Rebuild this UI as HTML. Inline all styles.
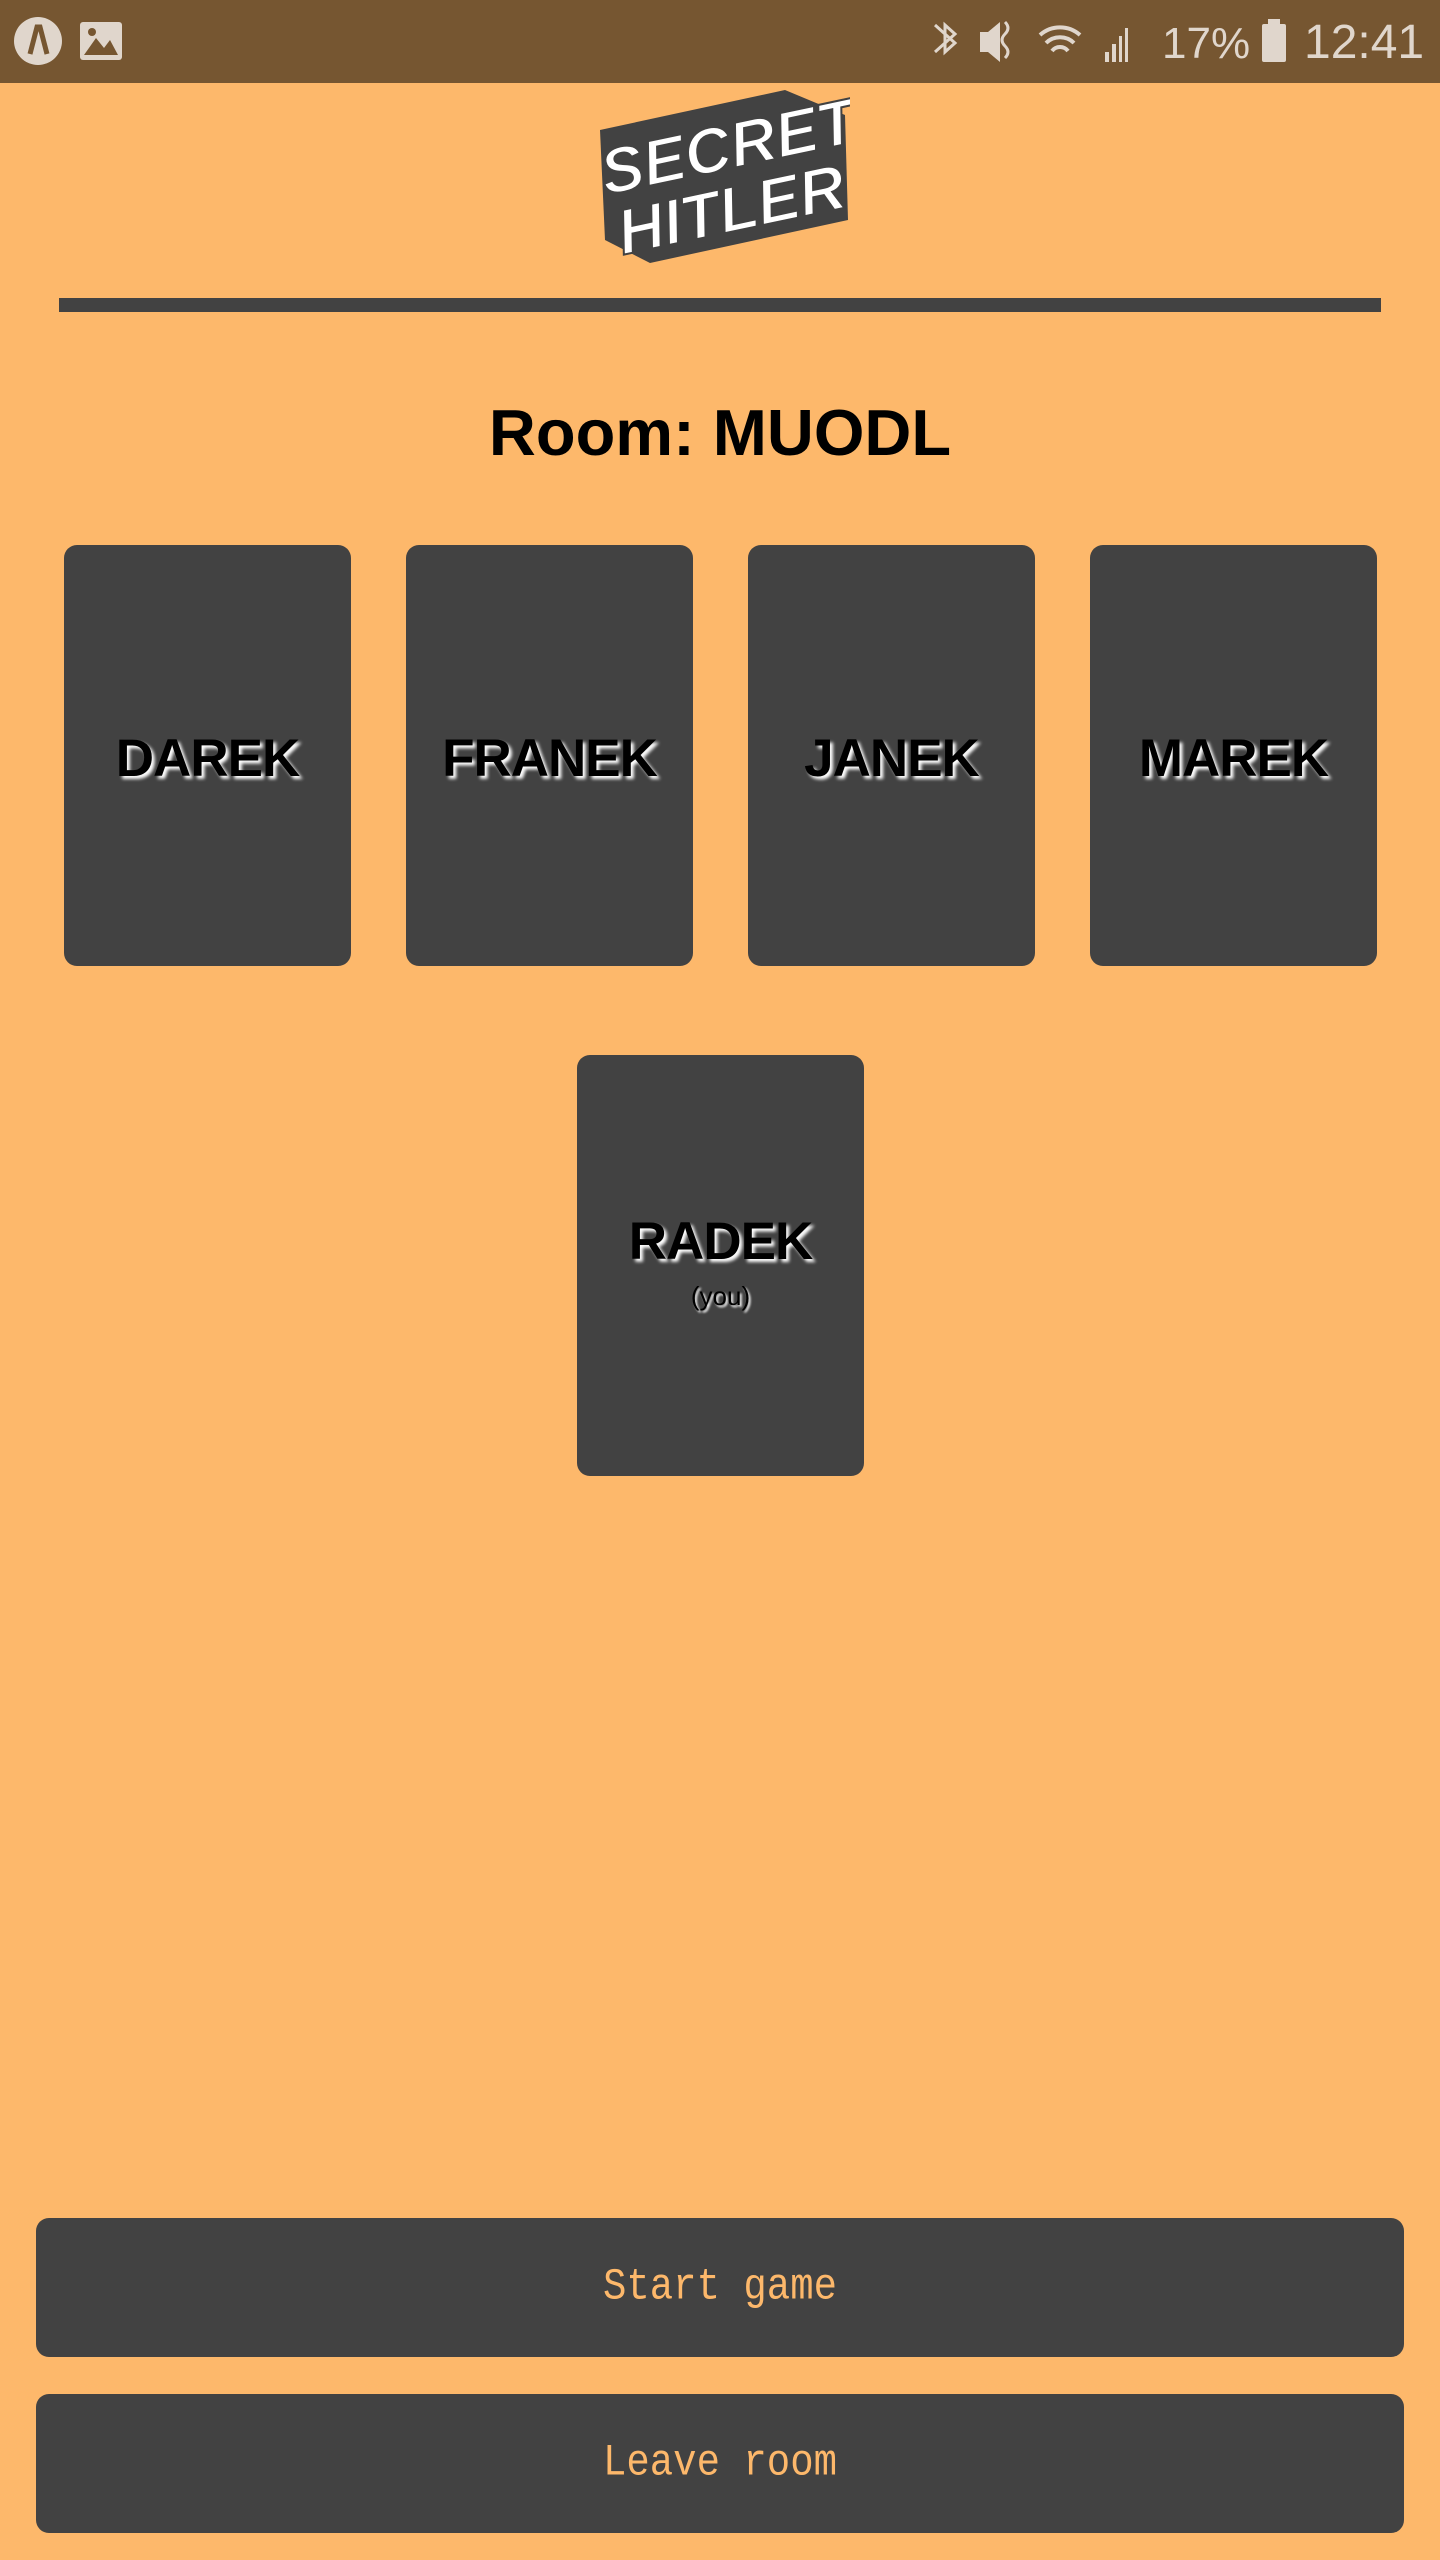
<!DOCTYPE html>
<html><head><meta charset="utf-8"><style>
*{margin:0;padding:0;box-sizing:border-box}
body{width:1440px;height:2560px;background:#FDB86B;position:relative;overflow:hidden;font-family:"Liberation Sans",sans-serif}
.status{position:absolute;left:0;top:0;width:1440px;height:83px;background:#765631;color:#e0d6cc}
.bar{position:absolute;left:59px;top:298px;width:1322px;height:14px;background:#424242}
.title{position:absolute;left:0;width:1440px;top:395px;text-align:center;font-weight:bold;font-size:65px;color:#000}
.card{position:absolute;width:287px;height:421px;background:#424242;border-radius:13px;text-align:center}
.card .n{position:absolute;left:0;right:0;top:183px;font-weight:bold;font-size:53px;letter-spacing:-1px;color:#000;text-shadow:3px 3px 3px #fff}
.card .y{position:absolute;left:0;right:0;top:234px;font-size:26px;color:#000;text-shadow:2px 2px 2px #fff}
.btn{position:absolute;left:36px;width:1368px;height:139px;background:#424242;border-radius:13px;color:#FDB86B;font-family:"Liberation Mono",monospace;font-size:39px;text-align:center;line-height:139px}
.btn span{display:inline-block;transform:scaleY(1.15)}
</style></head><body>
<div class="status">
<svg width="1440" height="83" viewBox="0 0 1440 83">
<circle cx="38" cy="41" r="24" fill="#e0d6cc"/><path d="M30 54 L37 27 L40 27 L47 54" stroke="#765631" stroke-width="5" fill="none"/>
<rect x="80" y="22" width="42" height="38" rx="3" fill="#e0d6cc"/><path d="M84 55 L96 38 L104 48 L110 40 L118 55Z" fill="#765631"/><circle cx="92" cy="32" r="4" fill="#765631"/>
<path d="M935 25 L955 43 L945 52 L945 25 L955 34 L935 52" stroke="#e0d6cc" stroke-width="3" fill="none"/>
<path d="M980 32 h8 l12 -10 v40 l-12 -10 h-8z" fill="#e0d6cc"/><path d="M1005 22 q6 6 0 12 q-6 6 0 12 q6 6 0 12" stroke="#e0d6cc" stroke-width="3" fill="none"/>
<path d="M1040 35 a30 30 0 0 1 40 0 M1046 43 a20 20 0 0 1 28 0 M1052 51 a10 10 0 0 1 16 0" stroke="#e0d6cc" stroke-width="4" fill="none"/>
<path d="M1105 62 h4 v-10 h-4z M1112 62 h4 v-18 h-4z M1119 62 h3 v-26 h-3z M1125 62 h3 v-34 h-3z" fill="#e0d6cc"/>
<text x="1162" y="58" font-family="Liberation Sans" font-size="44" fill="#e0d6cc">17%</text>
<rect x="1262" y="24" width="24" height="38" rx="2" fill="#e0d6cc"/><rect x="1268" y="19" width="12" height="6" fill="#e0d6cc"/>
<text x="1304" y="58" font-family="Liberation Sans" font-size="48" fill="#e0d6cc">12:41</text>
</svg></div>
<svg style="position:absolute;left:590px;top:85px" width="260" height="185" viewBox="0 0 260 185">
<polygon points="10,45 195,5 255,30 258,135 60,178 15,155" fill="#424242"/>
<g transform="rotate(-12 120 90)">
<text x="14" y="88" font-family="Liberation Sans" font-weight="bold" font-style="italic" font-size="64" fill="#fff" stroke="#424242" stroke-width="2">SECRET</text>
<text x="18" y="150" font-family="Liberation Sans" font-weight="bold" font-style="italic" font-size="64" fill="#fff" stroke="#424242" stroke-width="2">HITLER</text>
</g></svg>
<div class="bar"></div>
<div class="title">Room: MUODL</div>
<div class="card" style="left:64px;top:545px"><div class="n">DAREK</div></div>
<div class="card" style="left:406px;top:545px"><div class="n">FRANEK</div></div>
<div class="card" style="left:748px;top:545px"><div class="n">JANEK</div></div>
<div class="card" style="left:1090px;top:545px"><div class="n">MAREK</div></div>
<div class="card" style="left:577px;top:1055px"><div class="n" style="top:156px">RADEK</div><div class="y" style="top:226px">(you)</div></div>
<div class="btn" style="top:2218px"><span>Start game</span></div>
<div class="btn" style="top:2394px"><span>Leave room</span></div>
</body></html>
